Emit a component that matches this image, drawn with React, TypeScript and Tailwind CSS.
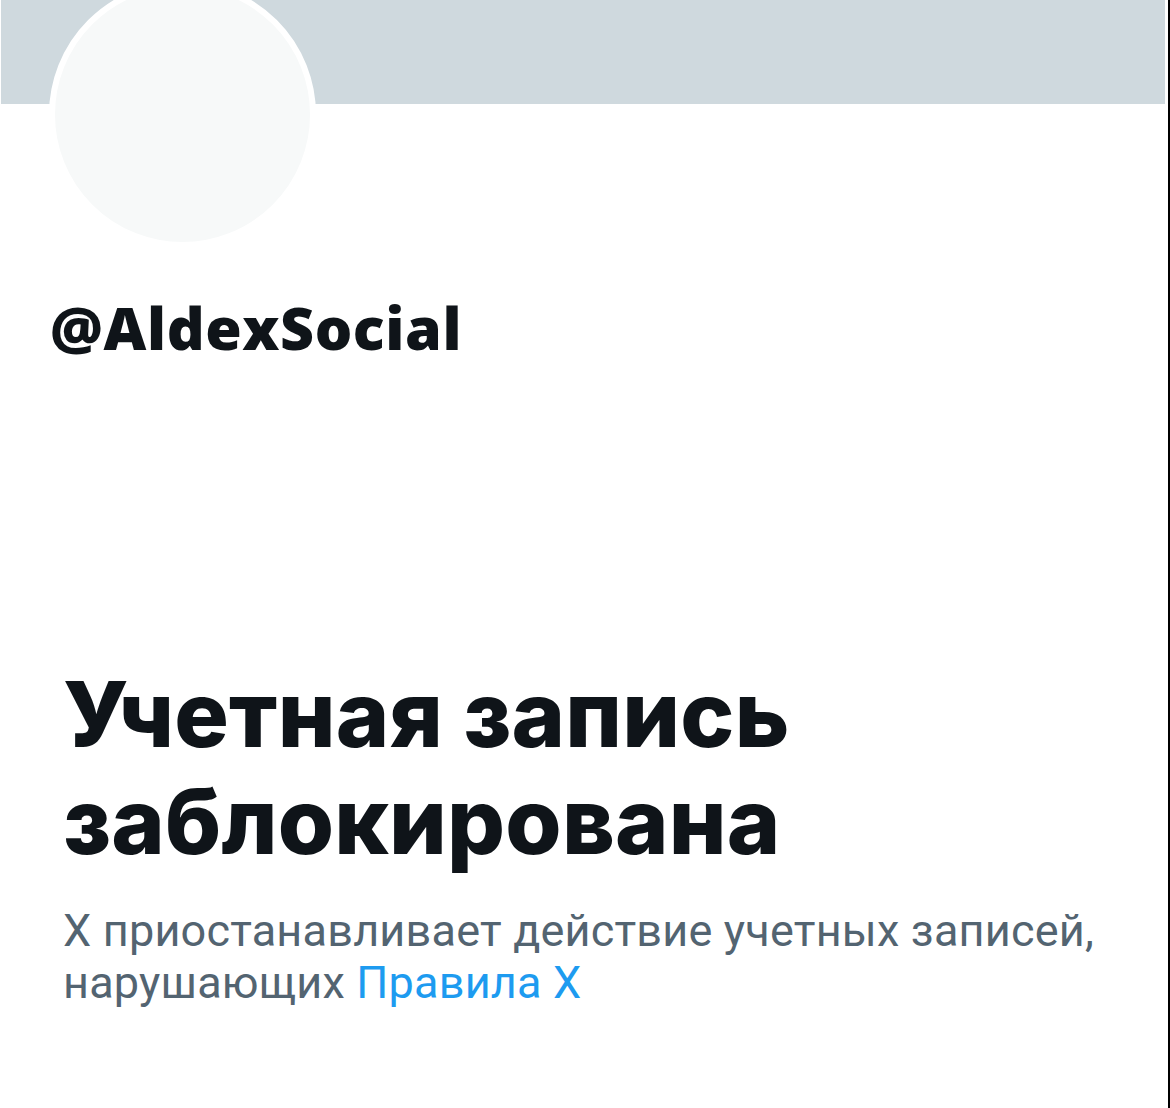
import React from "react";

export default function App() {
  return (
    <div className="w-[1170px] h-[1108px] bg-white overflow-hidden flex">
      <div className="flex-1 flex flex-col pl-[1px] pr-[3px]">
        <div className="h-[104px] bg-[#cfd9de] shrink-0" />
        <div className="mt-[-123px] ml-[48px] w-[267px] h-[267px] rounded-full border-[6px] border-white bg-[#f7f9f9] shrink-0 relative" />
        <div
          className="mt-[50px] ml-[49px] text-[59px] leading-[59px] font-extrabold text-[#0f1419] tracking-[0.6px]"
          style={{ fontFamily: '"Open Sans", sans-serif' }}
        >
          @AldexSocial
        </div>
        <div
          className="mt-[304px] ml-[62px] text-[91px] leading-[107px] font-extrabold text-[#0f1419] tracking-[0.2px]"
          style={{ fontFamily: 'Inter, sans-serif' }}
        >
          Учетная запись
          <br />
          заблокирована
        </div>
        <div
          className="mt-[30px] ml-[62px] text-[45px] leading-[52px] text-[#536471] tracking-[0.2px]"
          style={{ fontFamily: 'Roboto, sans-serif' }}
        >
          X приостанавливает действие учетных записей,
          <br />
          нарушающих <span className="text-[#1d9bf0]">Правила X</span>
        </div>
      </div>
      <div className="w-[2px] bg-black shrink-0" />
    </div>
  );
}
